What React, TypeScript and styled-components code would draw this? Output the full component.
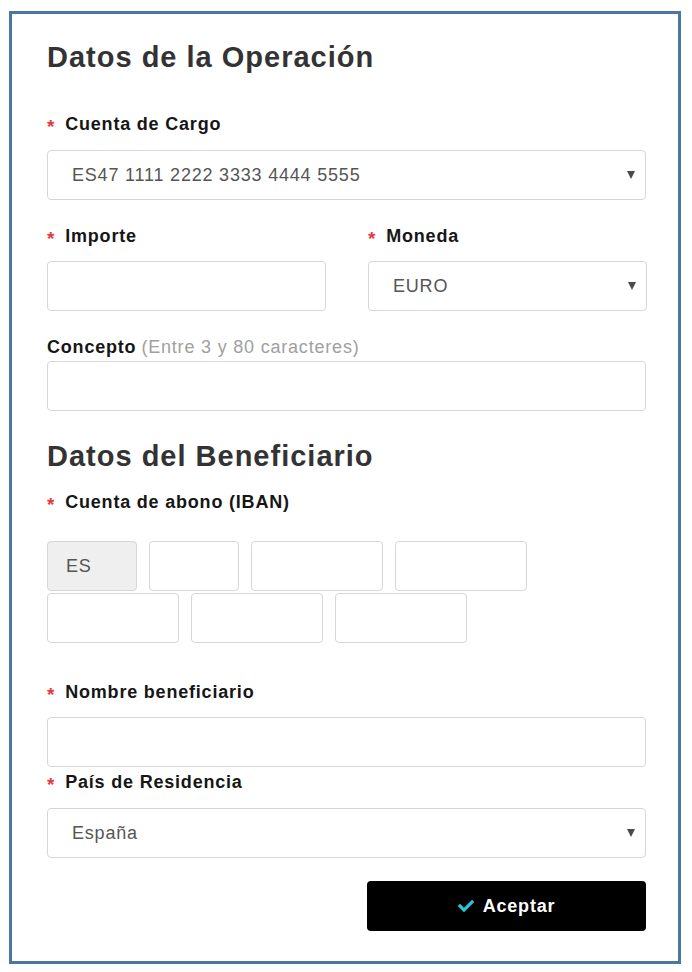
import styled, { createGlobalStyle } from "styled-components";
import { FaCheck } from "react-icons/fa";

const GlobalStyle = createGlobalStyle`
	html, body {
		margin: 0;
		padding: 0;
		background: #ffffff;
	}
	body {
		font-family: "Liberation Sans", Arial, sans-serif;
	}
	* {
		box-sizing: border-box;
	}
`;

const Frame = styled.div`
	margin: 11px 0 0 9px;
	width: 672px;
	border: 3px solid #4a76a1;
	padding: 26px 32px 30px 35px;
	font-family: "Liberation Sans", Arial, sans-serif;
`;

const Heading = styled.h2<{ $top?: number }>`
	margin: ${(p) => p.$top ?? 0}px 0 0;
	font-size: 29px;
	line-height: 34px;
	font-weight: 700;
	color: #333333;
	letter-spacing: 1px;
`;

const Label = styled.label<{ $top: number }>`
	display: flex;
	align-items: center;
	margin-top: ${(p) => p.$top}px;
	font-size: 18px;
	line-height: 22px;
	font-weight: 700;
	color: #161616;
	letter-spacing: 0.8px;
`;

const Star = styled.span`
	color: #e23a44;
	font-size: 19px;
	font-weight: 700;
	margin-right: 10px;
	transform: translateY(3px);
`;

const Hint = styled.span`
	font-weight: 400;
	color: #a0a0a0;
	margin-left: 5px;
`;

const Input = styled.input<{ $top: number }>`
	display: block;
	margin-top: ${(p) => p.$top}px;
	width: 100%;
	height: 50px;
	border: 1px solid #d6d6d6;
	border-radius: 4px;
	background: #ffffff;
	padding: 0 24px;
	font-family: inherit;
	font-size: 18px;
	color: #555555;
	outline: none;
`;

const SelectWrap = styled.div<{ $top: number }>`
	position: relative;
	margin-top: ${(p) => p.$top}px;
	&::after {
		content: "";
		position: absolute;
		right: 11px;
		top: 21px;
		border-left: 4px solid transparent;
		border-right: 4px solid transparent;
		border-top: 8px solid #4a4a4a;
		pointer-events: none;
	}
`;

const Select = styled.select`
	display: block;
	width: 100%;
	height: 50px;
	appearance: none;
	border: 1px solid #d6d6d6;
	border-radius: 4px;
	background: #ffffff;
	padding: 0 24px;
	font-family: inherit;
	font-size: 18px;
	letter-spacing: 0.8px;
	color: #555555;
	outline: none;
`;

const Row = styled.div`
	display: grid;
	grid-template-columns: 279px 279px;
	column-gap: 42px;
`;

const Col = styled.div``;

const IbanGrid = styled.div`
	display: flex;
	flex-wrap: wrap;
	column-gap: 12px;
	row-gap: 2px;
	margin-top: 28px;
`;

const IbanBox = styled.input<{ $width: number; $fixed?: boolean }>`
	width: ${(p) => p.$width}px;
	height: 50px;
	border: 1px solid #d6d6d6;
	border-radius: 4px;
	background: ${(p) => (p.$fixed ? "#efefef" : "#ffffff")};
	padding: 0 18px;
	font-family: inherit;
	font-size: 18px;
	letter-spacing: 0.8px;
	color: #555555;
	outline: none;
`;

const Actions = styled.div`
	display: flex;
	justify-content: flex-end;
	margin-top: 23px;
`;

const Button = styled.button`
	width: 279px;
	height: 50px;
	border: none;
	border-radius: 4px;
	background: #000000;
	color: #ffffff;
	font-family: inherit;
	font-size: 18px;
	font-weight: 700;
	letter-spacing: 0.8px;
	display: flex;
	align-items: center;
	justify-content: center;
	gap: 9px;
	cursor: pointer;
	svg {
		color: #27c5d6;
		width: 16px;
		height: 16px;
	}
`;

const ibanRest = [90, 132, 132, 132, 132, 132];

export default function App() {
	return (
		<>
			<GlobalStyle />
			<Frame>
				<Heading>Datos de la Operación</Heading>

				<Label $top={39}>
					<Star>*</Star>Cuenta de Cargo
				</Label>
				<SelectWrap $top={15}>
					<Select defaultValue="ES47">
						<option value="ES47">ES47 1111 2222 3333 4444 5555</option>
					</Select>
				</SelectWrap>

				<Row>
					<Col>
						<Label $top={25}>
							<Star>*</Star>Importe
						</Label>
						<Input $top={14} />
					</Col>
					<Col>
						<Label $top={25}>
							<Star>*</Star>Moneda
						</Label>
						<SelectWrap $top={14}>
							<Select defaultValue="EUR">
								<option value="EUR">EURO</option>
							</Select>
						</SelectWrap>
					</Col>
				</Row>

				<Label $top={25}>
					Concepto<Hint>(Entre 3 y 80 caracteres)</Hint>
				</Label>
				<Input $top={3} />

				<Heading $top={28}>Datos del Beneficiario</Heading>

				<Label $top={18}>
					<Star>*</Star>Cuenta de abono (IBAN)
				</Label>
				<IbanGrid>
					<IbanBox $width={90} $fixed readOnly defaultValue="ES" />
					{ibanRest.map((w, i) => (
						<IbanBox key={i} $width={w} />
					))}
				</IbanGrid>

				<Label $top={38}>
					<Star>*</Star>Nombre beneficiario
				</Label>
				<Input $top={14} />

				<Label $top={4}>
					<Star>*</Star>País de Residencia
				</Label>
				<SelectWrap $top={15}>
					<Select defaultValue="ES">
						<option value="ES">España</option>
					</Select>
				</SelectWrap>

				<Actions>
					<Button>
						<FaCheck />
						Aceptar
					</Button>
				</Actions>
			</Frame>
		</>
	);
}
